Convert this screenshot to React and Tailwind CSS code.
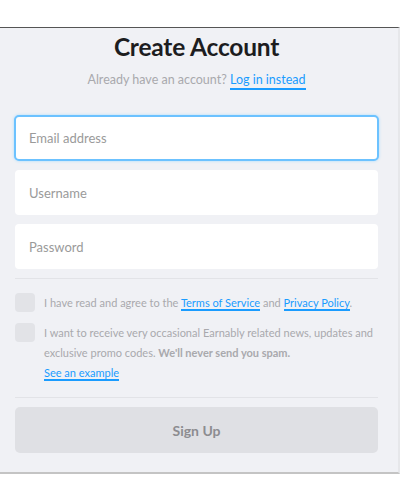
import { useState } from "react";

function App() {
  const [form, setForm] = useState({ email: "", username: "", password: "" });

  return (
    <div className="bg-white min-h-screen pt-[27px]" style={{ fontFamily: "Lato, 'Noto Sans', sans-serif" }}>
      <div className="bg-[#f0f1f5] border-t border-t-[#555] border-b-2 border-b-[#c4c4c4] border-r-2 border-r-[#e6e7ea] pl-[15px] pr-[20px] pt-[3px] pb-[19px]">
        {/* Header */}
        <h1 className="text-center text-[24.5px] font-bold text-[#1d1d1f] leading-[32px] tracking-[-0.2px]">Create Account</h1>
        <p className="text-center text-[12.5px] text-[#a9a9ad] mt-[9px] leading-[16px]">
          Already have an account?{" "}
          <a className="text-[#1a9cff] border-b-2 border-[#1a9cff] pb-[1px]">Log in instead</a>
        </p>

        {/* Inputs */}
        <div className="flex flex-col gap-[9px] mt-[27px]">
          <input
            type="text"
            placeholder="Email address"
            value={form.email}
            onChange={(e) => setForm({ ...form, email: e.target.value })}
            className="h-[46px] -mx-px w-[calc(100%+2px)] bg-white rounded-[5px] border-2 border-[#6cc2ff] shadow-[0_0_3px_#a8dcff] px-[13px] text-[13px] text-[#333] placeholder-[#9a9a9a] outline-none"
          />
          <input
            type="text"
            placeholder="Username"
            value={form.username}
            onChange={(e) => setForm({ ...form, username: e.target.value })}
            className="h-[45px] w-full bg-white rounded-[4px] px-[14px] text-[13px] text-[#333] placeholder-[#9a9a9a] outline-none"
          />
          <input
            type="password"
            placeholder="Password"
            value={form.password}
            onChange={(e) => setForm({ ...form, password: e.target.value })}
            className="h-[45px] w-full bg-white rounded-[4px] px-[14px] text-[13px] text-[#333] placeholder-[#9a9a9a] outline-none"
          />
        </div>

        <div className="h-px bg-[#e2e3e7] mt-[9px]"></div>

        {/* Checkboxes */}
        <div className="flex gap-[9px] mt-[14px]">
          <div className="w-[20px] h-[19px] rounded-[4px] bg-[#e2e3e7] shrink-0"></div>
          <p className="text-[11px] text-[#a9a9ad] leading-[20px]">
            I have read and agree to the{" "}
            <a className="text-[#1a9cff] border-b-2 border-[#1a9cff]">Terms of Service</a> and{" "}
            <a className="text-[#1a9cff] border-b-2 border-[#1a9cff]">Privacy Policy</a>.
          </p>
        </div>
        <div className="flex gap-[9px] mt-[10px]">
          <div className="w-[20px] h-[19px] rounded-[4px] bg-[#e2e3e7] shrink-0"></div>
          <div className="text-[11px] text-[#a9a9ad] leading-[20px]">
            <p>
              I want to receive very occasional Earnably related news, updates and exclusive promo codes.{" "}
              <span className="font-bold">We'll never send you spam.</span>
            </p>
            <a className="text-[#1a9cff] border-b-2 border-[#1a9cff]">See an example</a>
          </div>
        </div>

        <div className="h-px bg-[#e2e3e7] mt-[14px]"></div>

        {/* Sign up */}
        <button className="mt-[9px] w-full h-[46px] rounded-[5px] bg-[#dfe0e4] text-[#8c8c90] text-[14px] font-bold">Sign Up</button>
      </div>
    </div>
  );
}

export default App;
